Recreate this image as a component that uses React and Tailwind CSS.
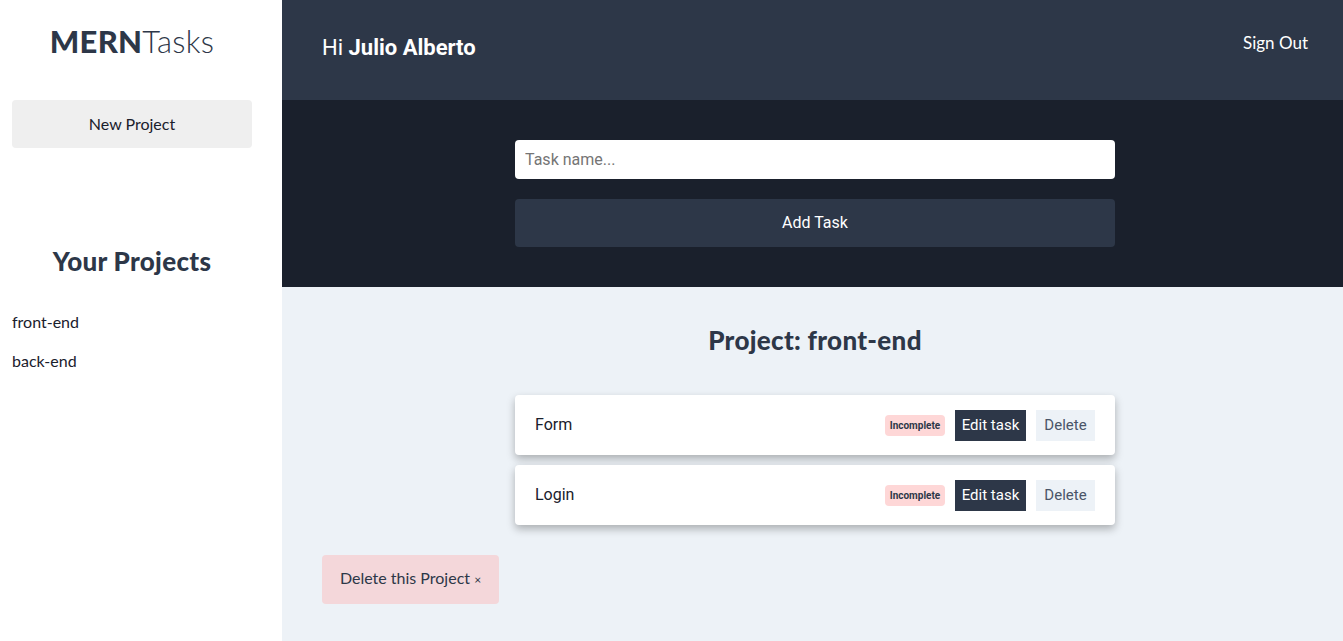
import React, { useState } from 'react';

const RALEWAY = "font-['Lato','Noto_Sans',sans-serif]";
const ROBOTO = "font-['Roboto','Liberation_Sans',sans-serif]";

const projects = ['front-end', 'back-end'];
const tasks = [
  { id: 1, name: 'Form', done: false },
  { id: 2, name: 'Login', done: false },
];

function Sidebar() {
  return (
    <aside className={`w-[282px] shrink-0 bg-white min-h-[641px] ${RALEWAY}`}>
      <div className="w-[264px]">
        <h1 className="pt-[21px] text-center text-[31px] leading-[40px] tracking-[0.3px] text-[#2d3748]">
          <span className="font-black">MERN</span>
          <span className="font-light">Tasks</span>
        </h1>
        <div className="px-3 mt-[39px]">
          <button className="w-full h-12 rounded bg-[#efefef] text-[16px] text-[#1a202c]">New Project</button>
        </div>
        <h2 className="mt-[97px] text-center text-[26px] leading-8 font-black tracking-[0.3px] text-[#2d3748]">Your Projects</h2>
        <ul className="mt-[34px] px-3 flex flex-col gap-[17px] text-[16px] text-[#1a202c]">
          {projects.map((p) => (
            <li key={p} className="leading-[22px]">{p}</li>
          ))}
        </ul>
      </div>
    </aside>
  );
}

function TaskRow({ task }) {
  return (
    <li className="h-[60px] bg-white rounded shadow-[0_4px_8px_rgba(0,0,0,0.28)] flex items-center justify-between pl-5 pr-5">
      <span className={`${ROBOTO} text-[16px] text-[#1a202c]`}>{task.name}</span>
      <div className={`flex items-center gap-[10px] ${ROBOTO}`}>
        <span className="w-[60px] h-[21px] rounded bg-[#fed7d7] text-[10px] font-bold text-[#2d3748] flex items-center justify-center">
          {task.done ? 'Complete' : 'Incomplete'}
        </span>
        <button className="w-[71px] h-[31px] bg-[#2d3748] text-white text-[15px]">Edit task</button>
        <button className="w-[59px] h-[31px] bg-[#edf2f7] text-[#4a5568] text-[15px]">Delete</button>
      </div>
    </li>
  );
}

export default function App() {
  const [taskName, setTaskName] = useState('');

  return (
    <div className="flex min-h-[641px] bg-[#edf2f7]">
      <Sidebar />
      <div className="flex-1 flex flex-col">
        <header className="h-[100px] bg-[#2d3748] flex items-center justify-between pl-10 pr-[35px]">
          <p className={`${ROBOTO} text-white text-[22px] mt-[-6px]`}>
            Hi <span className="font-bold">Julio Alberto</span>
          </p>
          <button className={`${RALEWAY} text-white text-[17px] mt-[-14px]`}>Sign Out</button>
        </header>
        <section className="h-[187px] bg-[#1a202c] pt-10">
          <form className="w-[600px] ml-[233px] flex flex-col gap-5" onSubmit={(e) => e.preventDefault()}>
            <input
              value={taskName}
              onChange={(e) => setTaskName(e.target.value)}
              placeholder="Task name..."
              className={`${ROBOTO} h-[39px] w-full rounded bg-white px-[10px] text-[16px] text-[#1a202c] placeholder:text-[#757575] outline-none`}
            />
            <button className={`${ROBOTO} h-12 w-full rounded bg-[#2d3748] text-white text-[16px]`}>Add Task</button>
          </form>
        </section>
        <main className="flex-1 px-10">
          <div className="w-[600px] ml-[193px]">
            <h2 className={`${RALEWAY} mt-[37px] text-center text-[26px] leading-8 font-black tracking-[0.3px] text-[#2d3748]`}>
              Project: front-end
            </h2>
            <ul className="mt-[39px] flex flex-col gap-[10px]">
              {tasks.map((t) => (
                <TaskRow key={t.id} task={t} />
              ))}
            </ul>
          </div>
          <button className={`${RALEWAY} mt-[30px] w-[177px] h-[49px] rounded bg-[#f4d7da] text-[16px] text-[#2d3748] pb-[3px]`}>
            Delete this Project <span className="text-[12px]">&times;</span>
          </button>
        </main>
      </div>
    </div>
  );
}
